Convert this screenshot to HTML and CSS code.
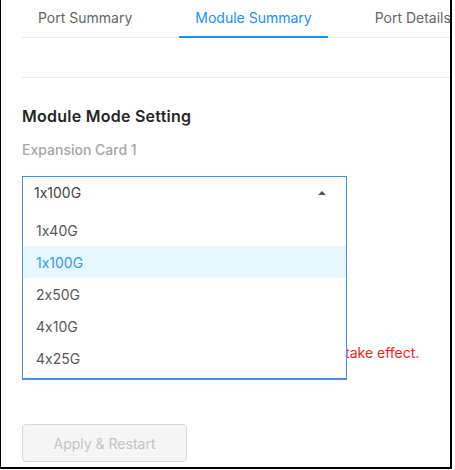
FILE: index.html
```html
<!DOCTYPE html>
<html lang="en">
<head>
<meta charset="utf-8">
<title>Module Summary</title>
<link rel="stylesheet" href="styles.css">
</head>
<body>
<div class="frame">
  <nav class="tabs">
    <div class="tab">Port Summary</div>
    <div class="tab active">Module Summary</div>
    <div class="tab">Port Details</div>
  </nav>
  <div class="toolbar"></div>
  <section class="content">
    <h2 class="title">Module Mode Setting</h2>
    <div class="label">Expansion Card 1</div>
    <div class="select open">
      <div class="select-value">
        <span>1x100G</span>
        <span class="caret"></span>
      </div>
      <ul class="dropdown">
        <li class="option">1x40G</li>
        <li class="option selected">1x100G</li>
        <li class="option">2x50G</li>
        <li class="option">4x10G</li>
        <li class="option">4x25G</li>
      </ul>
    </div>
    <p class="hint">take effect.</p>
    <button class="btn" disabled>Apply &amp; Restart</button>
  </section>
</div>
</body>
</html>
```

FILE: styles.css
```css
* { box-sizing: border-box; }
html, body { margin: 0; padding: 0; background: #fff; }
body {
  font-family: Inter, "Noto Sans", "Liberation Sans", sans-serif;
  font-size: 14px;
  color: #333;
  font-feature-settings: "calt" 0;
}

.frame {
  width: 452px;
  height: 469px;
  border-left: 1px solid #000;
  border-right: 2px solid #000;
  border-bottom: 2px solid #000;
  overflow: hidden;
  padding-left: 21px;
}

.tabs {
  display: flex;
  gap: 31px;
  height: 38px;
  border-bottom: 1px solid #e8e8e8;
  white-space: nowrap;
}
.tab {
  flex-shrink: 0;
  padding: 0 16px;
  line-height: 35px;
  color: #666;
  font-size: 14px;
  border-bottom: 2px solid transparent;
  height: 38px;
}
.tab.active { color: #1890ff; border-bottom-color: #1890ff; }

.toolbar { height: 40px; border-bottom: 1px solid #e8e8e8; }

.content { padding-top: 26px; }
.title {
  margin: 0;
  font-size: 16px;
  line-height: 24px;
  font-weight: 600;
  letter-spacing: 0.25px;
  color: #262626;
}
.label {
  margin-top: 11px;
  font-size: 14px;
  line-height: 22px;
  font-weight: 500;
  color: #a6a6a6;
}

.select {
  position: relative;
  margin-top: 15px;
  width: 325px;
  height: 32px;
  border: 1px solid #4a90e2;
}
.select-value {
  display: flex;
  align-items: center;
  justify-content: space-between;
  height: 30px;
  padding: 0 20px 0 11px;
  color: #444;
}
.caret {
  width: 0;
  height: 0;
  border-left: 4px solid transparent;
  border-right: 4px solid transparent;
  border-bottom: 4px solid #555;
  margin-top: 2px;
}
.dropdown {
  position: absolute;
  z-index: 2;
  left: -1px;
  right: -1px;
  top: 30px;
  margin: 0;
  padding: 7px 0 4px;
  list-style: none;
  background: #fff;
  border: 1px solid #4a90e2;
  border-top: none;
  border-bottom-width: 2px;
}
.option {
  height: 32px;
  line-height: 34px;
  padding-left: 13px;
  color: #595959;
}
.option.selected { background: #e6f7ff; color: #3d95ec; }

.hint {
  margin: 134px 0 0;
  padding-left: 323px;
  line-height: 22px;
  color: #ff1a1a;
  white-space: nowrap;
}

.btn {
  margin-top: 60px;
  width: 165px;
  height: 38px;
  font-family: inherit;
  font-size: 14px;
  color: #c4c4c4;
  background: #f5f5f5;
  border: 1px solid #d9d9d9;
  border-radius: 4px;
}
```
